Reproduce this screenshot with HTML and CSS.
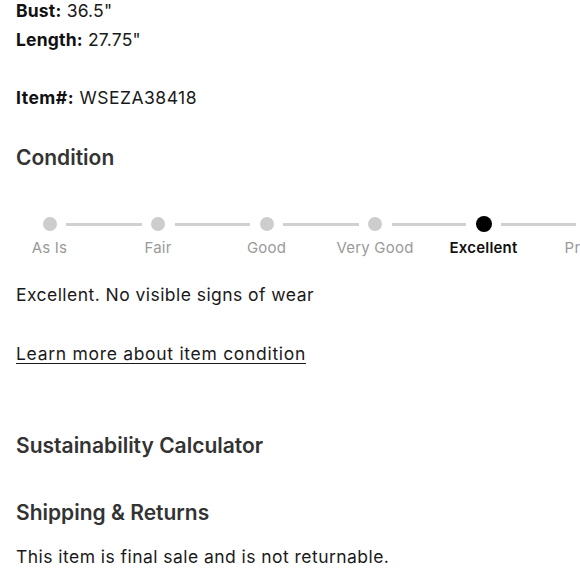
FILE: index.html
```html
<!DOCTYPE html>
<html lang="en">
<head>
<meta charset="utf-8">
<title>Item details</title>
<link rel="stylesheet" href="styles.css">
</head>
<body>
<main class="page">
  <div class="specs">
    <p class="spec"><b>Bust:</b> 36.5"</p>
    <p class="spec"><b>Length:</b> 27.75"</p>
  </div>
  <p class="spec item-no"><b>Item#:</b> WSEZA38418</p>

  <h2 class="heading condition-heading">Condition</h2>

  <div class="stepper-wrap">
    <ol class="stepper">
      <li class="step first"><span class="track"><span class="line left"></span><span class="dot"></span><span class="line right"></span></span><span class="label">As Is</span></li>
      <li class="step"><span class="track"><span class="line left"></span><span class="dot"></span><span class="line right"></span></span><span class="label">Fair</span></li>
      <li class="step"><span class="track"><span class="line left"></span><span class="dot"></span><span class="line right"></span></span><span class="label">Good</span></li>
      <li class="step"><span class="track"><span class="line left"></span><span class="dot"></span><span class="line right"></span></span><span class="label">Very Good</span></li>
      <li class="step active"><span class="track"><span class="line left"></span><span class="dot"></span><span class="line right"></span></span><span class="label">Excellent</span></li>
      <li class="step last"><span class="track"><span class="line left"></span><span class="dot"></span><span class="line right"></span></span><span class="label">Pristine</span></li>
    </ol>
  </div>

  <p class="body-text condition-text">Excellent. No visible signs of wear</p>
  <p class="body-text"><a class="learn-link" href="#">Learn more about item condition</a></p>

  <h2 class="heading sustain-heading">Sustainability Calculator</h2>
  <h2 class="heading shipping-heading">Shipping &amp; Returns</h2>
  <p class="body-text shipping-text">This item is final sale and is not returnable.</p>
</main>
</body>
</html>
```

FILE: styles.css
```css
* { box-sizing: border-box; }
html, body { margin: 0; padding: 0; background: #fff; }
body {
  font-family: Inter, "Noto Sans", "Liberation Sans", sans-serif;
  color: #1a1a1a;
  overflow: hidden;
}
.page {
  padding: 0 16px;
  width: 580px;
  height: 580px;
  overflow: hidden;
}
p, h2, ol { margin: 0; padding: 0; }

.specs { margin-top: -4px; }
.spec {
  font-size: 17.5px;
  line-height: 29px;
  color: #1a1a1a;
  letter-spacing: 0.2px;
}
.spec b { font-weight: 700; color: #111; letter-spacing: 0.2px; }
.item-no { margin-top: 29px; letter-spacing: 0.5px; }
.item-no b { letter-spacing: 0.5px; }

.heading {
  font-size: 21px;
  line-height: 28px;
  font-weight: 600;
  color: #333;
  letter-spacing: 0;
}
.condition-heading { margin-top: 32px; }

.stepper-wrap {
  margin: 44px -16px 0 -20.75px;
  overflow: hidden;
}
.stepper {
  list-style: none;
  display: flex;
  width: 700px;
}
.step {
  flex: 0 0 108.5px;
  display: flex;
  flex-direction: column;
  align-items: center;
}
.track {
  display: flex;
  align-items: center;
  width: 100%;
  height: 16px;
}
.line {
  flex: 1;
  height: 3px;
  background: #d0d0d0;
}
.line.left { margin-right: 9.5px; }
.line.right { margin-left: 9.5px; }
.first .line.left { visibility: hidden; }
.dot {
  width: 14px;
  height: 14px;
  border-radius: 50%;
  background: #cdcdcd;
  flex: 0 0 auto;
}
.active .dot {
  width: 16px;
  height: 16px;
  background: #000;
}
.label {
  margin-top: 6px;
  font-size: 15px;
  line-height: 20px;
  color: #9a9a9a;
  letter-spacing: 0.2px;
  white-space: nowrap;
}
.active .label { color: #111; font-weight: 600; }

.body-text {
  font-size: 17.5px;
  line-height: 24px;
  color: #1a1a1a;
  letter-spacing: 0.45px;
}
.condition-text { margin-top: 24.5px; }
.learn-link {
  display: inline-block;
  margin-top: 35.5px;
  color: #1a1a1a;
  letter-spacing: 0.7px;
  text-decoration: underline;
  text-underline-offset: 3px;
  text-decoration-thickness: 1px;
}
.sustain-heading { margin-top: 66px; }
.shipping-heading { margin-top: 38.7px; }
.shipping-text { margin-top: 18.3px; }
```
